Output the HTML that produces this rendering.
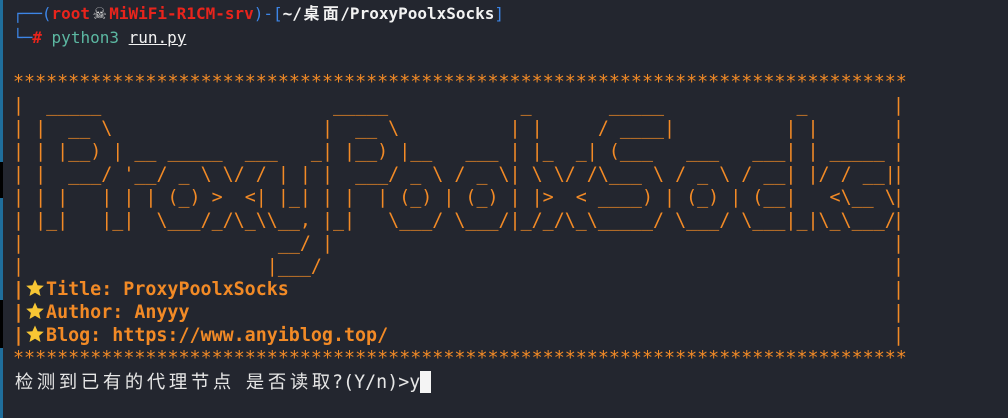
<!DOCTYPE html>
<html><head><meta charset="utf-8"><style>
html,body{margin:0;padding:0;}
body{width:1008px;height:418px;background:#23262f;position:relative;overflow:hidden;font-family:"Liberation Mono","DejaVu Sans Mono",monospace;}
.strip{position:absolute;left:0;width:3px;}
pre{margin:0;position:absolute;white-space:pre;}
.p{left:13px;top:0;font-size:16px;line-height:24px;color:#e8e8e8;}
.art{left:13px;top:71px;font-size:18.33px;line-height:23px;color:#f28a26;}
.rb{left:893px;top:94px;font-size:18.33px;line-height:23px;color:#f28a26;}
.b{color:#3d85e6}.r{color:#e8241c;font-weight:bold}.w{color:#f2f2f2;font-weight:bold}
.t{color:#5cb8a2}
.c2{display:inline-block;width:19.2px;text-align:center;font-family:"Noto Sans CJK SC",sans-serif;}
.c3{display:inline-block;width:22px;text-align:center;font-family:"Noto Sans CJK SC",sans-serif;}
.bold{font-weight:bold}
.q{left:13px;top:370px;font-size:18.33px;line-height:23px;color:#e6e6e6;}
.star{display:inline-block;width:22px;height:18px;vertical-align:-2px;}
</style></head><body>
<div class="strip" style="top:0;height:162px;background:#1f6e9c"></div>
<div class="strip" style="top:162px;height:36px;background:#000"></div>
<div class="strip" style="top:198px;height:102px;background:#1f6e9c"></div>
<div class="strip" style="top:300px;height:48px;background:#000"></div>
<div class="strip" style="top:348px;height:70px;background:#1f6e9c"></div>

<pre class="p"><span class="b">┌──(</span><span class="r">root<span class="c2" style="color:#ddd;font-weight:normal">☠</span>MiWiFi-R1CM-srv</span><span class="b">)-[</span><span class="w">~/<span class="c2">桌</span><span class="c2">面</span>/ProxyPoolxSocks</span><span class="b">]</span>
<span class="b">└─</span><span class="r">#</span> <span class="t">python3</span> <span style="text-decoration:underline;color:#f2f2f2">run.py</span></pre>

<pre class="art">*********************************************************************************
|  _____                     _____            _       _____            _
| |  __ \                   |  __ \          | |     / ____|          | |
| | |__) | __ _____  ___   _| |__) |__   ___ | |_  _| (___   ___   ___| | _____
| |  ___/ '__/ _ \ \/ / | | |  ___/ _ \ / _ \| \ \/ /\___ \ / _ \ / __| |/ / __|
| | |   | | | (_) &gt;  &lt;| |_| | |  | (_) | (_) | |&gt;  &lt; ____) | (_) | (__|   &lt;\__ \
| |_|   |_|  \___/_/\_\\__, |_|   \___/ \___/|_/_/\_\_____/ \___/ \___|_|\_\___/
|                       __/ |
|                      |___/
<span class="bold">|<svg class="star" viewBox="0 0 22 18"><path d="M11 0.5 L13.6 6.2 L19.8 6.8 L15.1 10.9 L16.5 17 L11 13.8 L5.5 17 L6.9 10.9 L2.2 6.8 L8.4 6.2 Z" fill="#f7c634"/></svg>Title: ProxyPoolxSocks</span>
<span class="bold">|<svg class="star" viewBox="0 0 22 18"><path d="M11 0.5 L13.6 6.2 L19.8 6.8 L15.1 10.9 L16.5 17 L11 13.8 L5.5 17 L6.9 10.9 L2.2 6.8 L8.4 6.2 Z" fill="#f7c634"/></svg>Author: Anyyy</span>
<span class="bold">|<svg class="star" viewBox="0 0 22 18"><path d="M11 0.5 L13.6 6.2 L19.8 6.8 L15.1 10.9 L16.5 17 L11 13.8 L5.5 17 L6.9 10.9 L2.2 6.8 L8.4 6.2 Z" fill="#f7c634"/></svg>Blog: https://www.anyiblog.top/</span>
*********************************************************************************</pre>

<pre class="rb">|
|
|
|
|
|
|
|
|
|
|</pre>

<pre class="q"><span class="c3">检</span><span class="c3">测</span><span class="c3">到</span><span class="c3">已</span><span class="c3">有</span><span class="c3">的</span><span class="c3">代</span><span class="c3">理</span><span class="c3">节</span><span class="c3">点</span> <span class="c3">是</span><span class="c3">否</span><span class="c3">读</span><span class="c3">取</span>?(Y/n)&gt;y<span style="display:inline-block;width:11px;height:22px;background:#f4f4f4;vertical-align:-5px"></span></pre>
</body></html>
